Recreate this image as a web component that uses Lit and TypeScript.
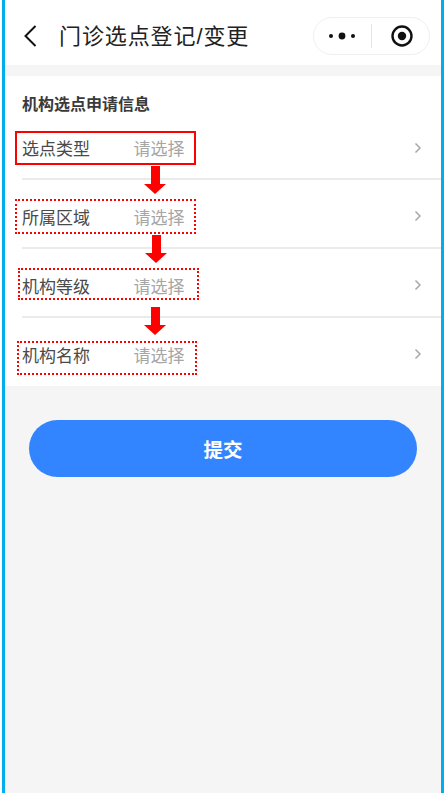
import { LitElement, html, css, svg } from "lit";
import { customElement } from "lit/decorators.js";

const rows = ["选点类型", "所属区域", "机构等级", "机构名称"];
const boxes = [
  { x: 15, y: 131, w: 181, h: 34, solid: true },
  { x: 15, y: 199, w: 181, h: 35, solid: false },
  { x: 18, y: 268, w: 181, h: 32, solid: false },
  { x: 17, y: 341, w: 180, h: 34, solid: false },
];
const arrows = [
  { x: 144, y: 166 },
  { x: 145, y: 235 },
  { x: 144, y: 307 },
];

@customElement("app-root")
export class AppRoot extends LitElement {
  static styles = css`
    :host {
      display: block;
      width: 446px;
      height: 793px;
      background: #fff;
      font-family: "Liberation Sans", "Noto Sans CJK SC", sans-serif;
      overflow: hidden;
    }
    .frame {
      position: relative;
      box-sizing: border-box;
      width: 442px;
      height: 793px;
      margin-left: 2px;
      border-left: 3px solid #00aeef;
      border-right: 3px solid #00aeef;
      background: #f5f5f5;
      display: flex;
      flex-direction: column;
    }
    .nav {
      height: 65px;
      background: #fff;
      display: flex;
      align-items: center;
      padding: 7px 11px 0 18px;
      box-sizing: border-box;
      flex: none;
    }
    .back { width: 18px; height: 24px; flex: none; margin-right: 18px; }
    .title {
      flex: 1;
      font-size: 22px;
      line-height: 30px;
      color: #222;
      letter-spacing: 0.9px;
      white-space: nowrap;
      margin-top: 2px;
    }
    .capsule {
      width: 117px;
      height: 38px;
      box-sizing: border-box;
      border: 1px solid #efefef;
      border-radius: 19px;
      background: #fff;
      display: flex;
      align-items: center;
      flex: none;
    }
    .capsule svg { display: block; }
    .dots { width: 57px; height: 20px; flex: none; }
    .sep { width: 1px; height: 24px; background: #e4e4e4; flex: none; }
    .target { width: 57px; height: 24px; flex: none; }
    .panel {
      margin-top: 11px;
      background: #fff;
      height: 310px;
      padding-left: 17px;
      box-sizing: border-box;
      flex: none;
    }
    .heading {
      height: 41px;
      box-sizing: border-box;
      padding-top: 17px;
      font-size: 16px;
      line-height: 24px;
      font-weight: 700;
      color: #3a3a3a;
    }
    .row {
      height: 69px;
      box-sizing: border-box;
      padding-top: 5px;
      border-bottom: 2px solid #ebebeb;
      display: flex;
      align-items: center;
      font-size: 17px;
      color: #4a4a4a;
    }
    .row.first { height: 63px; padding-top: 0; }
    .row.last { height: 68px; padding-top: 4px; border-bottom: none; }
    .label { width: 111.5px; flex: none; }
    .value { flex: 1; color: #a6a6a6; }
    .chev { width: 8px; height: 12px; margin-right: 19px; flex: none; }
    .wrap { padding: 34px 24px 0; }
    button {
      display: block;
      width: 388px;
      height: 57px;
      border: none;
      border-radius: 28.5px;
      background: #3385ff;
      color: #fff;
      font: 700 19.5px "Liberation Sans", "Noto Sans CJK SC", sans-serif;
      padding: 0;
    }
    .box { position: absolute; box-sizing: border-box; border: 2px dotted #f00; }
    .box.solid { border-style: solid; }
    .arrow { position: absolute; width: 22px; height: 28px; }
  `;

  render() {
    return html`
      <div class="frame">
        <div class="nav">
          <svg class="back" viewBox="0 0 18 24" fill="none" stroke="#111" stroke-width="2">
            <path d="M12.5 2 L2.5 12 L12.5 22" />
          </svg>
          <div class="title">门诊选点登记/变更</div>
          <div class="capsule">
            <svg class="dots" viewBox="0 0 57 20" fill="#111">
              <circle cx="17" cy="10" r="2" />
              <circle cx="28" cy="10" r="3.4" />
              <circle cx="39" cy="10" r="2" />
            </svg>
            <div class="sep"></div>
            <svg class="target" viewBox="0 0 57 24">
              <circle cx="30" cy="12" r="9.5" fill="none" stroke="#111" stroke-width="2.4" />
              <circle cx="30" cy="12" r="4.2" fill="#111" />
            </svg>
          </div>
        </div>
        <div class="panel">
          <div class="heading">机构选点申请信息</div>
          ${rows.map(
            (r, i) => html`
              <div class="row ${i === 0 ? "first" : ""} ${i === rows.length - 1 ? "last" : ""}">
                <span class="label">${r}</span>
                <span class="value">请选择</span>
                <svg class="chev" viewBox="0 0 8 12" fill="none" stroke="#a8a8a8" stroke-width="1.5">
                  <path d="M1.5 1.5 L6 6 L1.5 10.5" />
                </svg>
              </div>
            `
          )}
        </div>
        <div class="wrap"><button>提交</button></div>
        ${boxes.map(
          (b) => html`<div
            class="box ${b.solid ? "solid" : ""}"
            style="left:${b.x - 5}px;top:${b.y}px;width:${b.w}px;height:${b.h}px"
          ></div>`
        )}
        ${arrows.map(
          (a) => html`<svg class="arrow" style="left:${a.x - 5}px;top:${a.y}px" viewBox="0 0 22 28" fill="#f00">
            ${svg`<path d="M7 0 H16 V18 H22 L11 28 L0 18 H7 Z" />`}
          </svg>`
        )}
      </div>
    `;
  }
}
